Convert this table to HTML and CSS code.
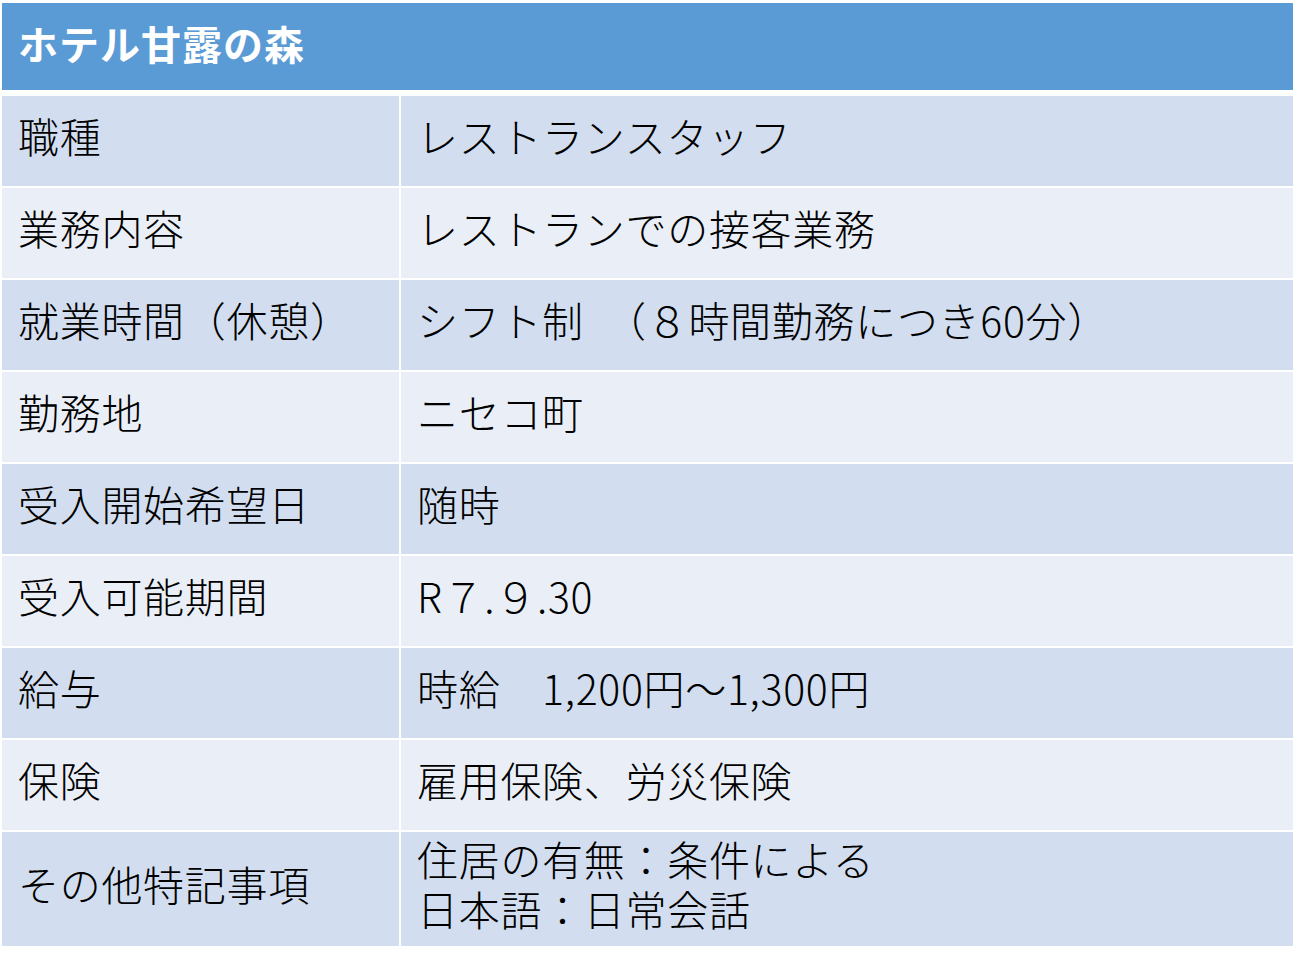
FILE: index.html
```html
<!DOCTYPE html>
<html lang="ja">
<head>
<meta charset="utf-8">
<title>ホテル甘露の森</title>
<link rel="stylesheet" href="styles.css">
</head>
<body>
<div class="table">
  <div class="head">ホテル甘露の森</div>
  <div class="cell odd">職種</div><div class="cell odd">レストランスタッフ</div>
  <div class="cell even">業務内容</div><div class="cell even">レストランでの接客業務</div>
  <div class="cell odd">就業時間（休憩）</div><div class="cell odd">シフト制　（８時間勤務につき60分）</div>
  <div class="cell even">勤務地</div><div class="cell even">ニセコ町</div>
  <div class="cell odd">受入開始希望日</div><div class="cell odd">随時</div>
  <div class="cell even">受入可能期間</div><div class="cell even">R７.９.30</div>
  <div class="cell odd">給与</div><div class="cell odd">時給　1,200円～1,300円</div>
  <div class="cell even">保険</div><div class="cell even">雇用保険、労災保険</div>
  <div class="cell odd">その他特記事項</div><div class="cell odd"><div class="lines"><span>住居の有無：条件による</span><span>日本語：日常会話</span></div></div>
</div>
</body>
</html>
```
FILE: styles.css
```css
html, body {
  margin: 0;
  padding: 0;
  background: #ffffff;
}
body {
  padding: 3px 6px 0 2px;
  font-family: "Noto Sans CJK JP", "Noto Sans", sans-serif;
  color: #000000;
}
.table {
  display: grid;
  grid-template-columns: 397px 892px;
  grid-template-rows: 91px repeat(8, 90px) 114px;
  column-gap: 2px;
  row-gap: 2px;
}
.head {
  grid-column: 1 / span 2;
  align-self: start;
  height: 87px;
  background: #5b9bd5;
  color: #ffffff;
  font-weight: 700;
  font-size: 40px;
  letter-spacing: 1px;
  display: flex;
  align-items: center;
  padding-left: 16px;
  padding-bottom: 8px;
  box-sizing: border-box;
}
.cell {
  display: flex;
  align-items: center;
  padding-left: 16px;
  padding-bottom: 12px;
  box-sizing: border-box;
  font-size: 41px;
  font-weight: 300;
  letter-spacing: 0.7px;
  line-height: 50px;
  white-space: nowrap;
}
.cell.odd { background: #d2deef; }
.cell.even { background: #eaeff7; }
.lines {
  display: flex;
  flex-direction: column;
}
```
